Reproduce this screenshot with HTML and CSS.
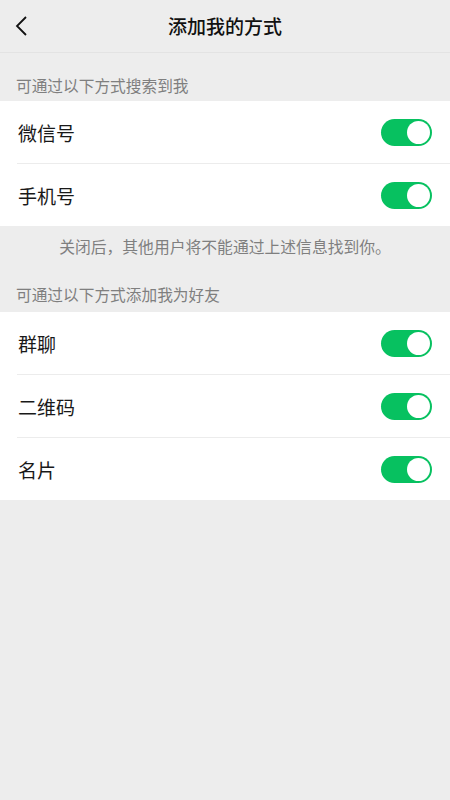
FILE: index.html
```html
<!DOCTYPE html>
<html lang="zh-CN">
  <head>
    <meta charset="UTF-8" />
    <title>添加我的方式</title>
    <link rel="stylesheet" href="styles.css">
  </head>
  <body>
    <div class="page">
      <header class="topbar">
        <span class="back">
          <svg width="14" height="22" viewBox="0 0 14 22">
            <polyline points="11,2 2,11 11,20" fill="none" stroke="#111" stroke-width="1.8" stroke-linejoin="miter" />
          </svg>
        </span>
        <h1 class="title">添加我的方式</h1>
      </header>

      <div class="section-label">可通过以下方式搜索到我</div>
      <ul class="group">
        <li class="row"><span class="row-label">微信号</span><span class="switch on"></span></li>
        <li class="row"><span class="row-label">手机号</span><span class="switch on"></span></li>
      </ul>
      <p class="note">关闭后，其他用户将不能通过上述信息找到你。</p>

      <div class="section-label second">可通过以下方式添加我为好友</div>
      <ul class="group">
        <li class="row"><span class="row-label">群聊</span><span class="switch on"></span></li>
        <li class="row"><span class="row-label">二维码</span><span class="switch on"></span></li>
        <li class="row"><span class="row-label">名片</span><span class="switch on"></span></li>
      </ul>
    </div>
  </body>
</html>
```

FILE: styles.css
```css
body {
  margin: 0;
  padding: 0;
  background: #ededed;
  font-family: "Noto Sans CJK SC", "Noto Sans", sans-serif;
  color: #191919;
}
.page {
  min-height: 100vh;
}
.topbar {
  height: 52px;
  border-bottom: 1px solid #e3e3e3;
  display: flex;
  align-items: center;
  justify-content: center;
  position: relative;
}
.back {
  position: absolute;
  left: 15px;
  top: 15px;
  width: 14px;
  height: 22px;
}
.back svg {
  display: block;
}
.title {
  margin: 0;
  font-size: 19px;
  font-weight: 500;
  color: #111;
  line-height: 24px;
}
.section-label {
  padding: 22px 16px 4px 16px;
  font-size: 15.7px;
  line-height: 22px;
  color: #7f7f7f;
}
.section-label.second {
  padding-top: 26px;
  padding-bottom: 6px;
}
.group {
  list-style: none;
  margin: 0;
  padding: 0 0 0 17px;
  background: #fff;
}
.row {
  height: 62px;
  display: flex;
  align-items: center;
  justify-content: space-between;
  padding-right: 18px;
}
.row + .row {
  border-top: 1px solid #ececec;
}
.row-label {
  font-size: 19px;
  color: #191919;
  padding-left: 1px;
}
.switch {
  width: 51px;
  height: 27px;
  border-radius: 14px;
  background: #e5e5e5;
  position: relative;
}
.switch::after {
  content: "";
  position: absolute;
  top: 2px;
  left: 2px;
  width: 23px;
  height: 23px;
  border-radius: 50%;
  background: #fff;
  box-shadow: 0 1px 2px rgba(0,0,0,0.1);
}
.switch.on {
  background: #07c160;
}
.switch.on::after {
  left: 26px;
  box-shadow: none;
}
.note {
  margin: 0;
  padding: 10px 16px 0 16px;
  text-align: center;
  font-size: 15.8px;
  line-height: 22px;
  color: #7f7f7f;
}
```
